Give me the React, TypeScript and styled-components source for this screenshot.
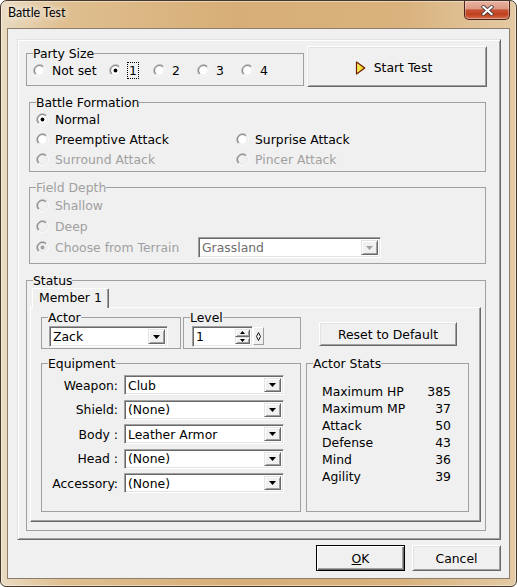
import React from "react";
import styled, { createGlobalStyle } from "styled-components";

const GlobalStyle = createGlobalStyle`
  *, *::before, *::after { box-sizing: border-box; }
  html, body { margin: 0; padding: 0; background: #ffffff; }
  body {
    font-family: "DejaVu Sans", Verdana, sans-serif;
    font-size: 12.4px;
    color: #000;
  }
`;

const Window = styled.div`
  width: 517px;
  height: 587px;
  display: flex;
  flex-direction: column;
  border: 1px solid #45382a;
  border-radius: 7px 7px 6px 6px;
  padding: 0 6px 7px;
  background: linear-gradient(90deg, #eadbc2 0%, #dfbf90 12%, #d7ae77 45%, #d9b27d 78%, #e4caa4 100%);
  box-shadow: inset 0 0 0 1px rgba(255, 255, 255, 0.45);
  overflow: hidden;
`;

const TitleBar = styled.div`
  height: 27px;
  flex: none;
  display: flex;
  justify-content: space-between;
  align-items: flex-start;
`;

const Title = styled.div`
  padding: 4px 0 0 1px;
  font-family: Lato, "Noto Sans", sans-serif;
  font-size: 12.5px;
  line-height: 16px;
  color: #000;
  text-shadow: 0 0 6px #fff, 0 0 10px rgba(255, 255, 255, 0.9);
`;

const CloseButton = styled.div`
  width: 46px;
  height: 19px;
  border: 1px solid #4a2018;
  border-top: none;
  border-radius: 0 0 5px 5px;
  background: linear-gradient(180deg, #e9b3a0 0%, #dc9a84 42%, #c75336 50%, #c1401f 75%, #d4704e 100%);
  box-shadow: inset 0 0 0 1px rgba(255, 255, 255, 0.35);
  display: flex;
  align-items: center;
  justify-content: center;
`;

const Client = styled.div`
  flex: 1;
  display: flex;
  flex-direction: column;
  background: #f0f0f0;
  border: 1px solid #8c7e6a;
  padding: 10px 8px 0 9px;
`;

const OuterPanel = styled.div`
  width: 484px;
  height: 501px;
  flex: none;
  border: 1px solid;
  border-color: #e3e3e3 #696969 #696969 #e3e3e3;
  box-shadow: inset 1px 1px 0 #fff, inset -1px -1px 0 #a0a0a0;
  padding: 6px 0 0 8px;
  display: flex;
  flex-direction: column;
  align-items: flex-start;
`;

const TopRow = styled.div`
  display: flex;
  align-items: flex-start;
`;

const Group = styled.fieldset<{ $w: number; $h: number; $ml?: number; $mt?: number }>`
  width: ${(p) => p.$w}px;
  height: ${(p) => p.$h}px;
  margin: ${(p) => p.$mt ?? 0}px 0 0 ${(p) => p.$ml ?? 0}px;
  padding: 0;
  border: 1px solid #a0a0a0;
  min-inline-size: 0;
  flex: none;
`;

const Legend = styled.legend<{ $disabled?: boolean }>`
  margin-left: 6px;
  padding: 0;
  line-height: 15px;
  font-size: 12.4px;
  color: ${(p) => (p.$disabled ? "#a0a0a0" : "#000")};
`;

const PartyRow = styled.div`
  display: flex;
  align-items: center;
  height: 18px;
  padding-left: 6px;
`;

const RadioItem = styled.label<{ $w?: number; $disabled?: boolean; $gap?: number }>`
  display: inline-flex;
  align-items: center;
  gap: ${(p) => p.$gap ?? 6}px;
  width: ${(p) => (p.$w ? `${p.$w}px` : "auto")};
  flex: none;
  color: ${(p) => (p.$disabled ? "#a0a0a0" : "#000")};
  line-height: 15px;
  white-space: nowrap;
`;

const FocusText = styled.span`
  border: 1px dotted #000;
  padding: 0 1px;
  line-height: 15px;
`;

const RadioGrid = styled.div<{ $rows: string }>`
  display: grid;
  grid-template-columns: 200px auto;
  grid-template-rows: ${(p) => p.$rows};
  align-items: center;
  padding-left: 6px;
`;

const TerrainRow = styled.div`
  display: flex;
  align-items: center;
  grid-column: 1 / span 2;
`;

const RaisedButton = styled.button<{ $w: number; $h: number; $ml?: number; $mt?: number; $default?: boolean }>`
  width: ${(p) => p.$w}px;
  height: ${(p) => p.$h}px;
  margin: ${(p) => p.$mt ?? 0}px 0 0 ${(p) => p.$ml ?? 0}px;
  flex: none;
  padding: 0;
  font-family: inherit;
  font-size: 12.4px;
  line-height: 15px;
  color: #000;
  background: #f0f0f0;
  border: 1px solid;
  border-color: ${(p) => (p.$default ? "#000 #000 #000 #000" : "#fff #696969 #696969 #fff")};
  box-shadow: ${(p) =>
    p.$default
      ? "inset 1px 1px 0 #fff, inset -1px -1px 0 #696969, inset -2px -2px 0 #a0a0a0"
      : "inset 1px 1px 0 #e3e3e3, inset -1px -1px 0 #a0a0a0"};
  display: flex;
  align-items: center;
  justify-content: center;
  gap: 8px;
`;

const StartLabel = styled.span`
  padding: 2px 7px 0 0;
  display: flex;
  align-items: center;
  gap: 8px;
`;

const Combo = styled.div<{ $w: number; $h: number; $ml?: number }>`
  width: ${(p) => p.$w}px;
  height: ${(p) => p.$h}px;
  margin-left: ${(p) => p.$ml ?? 0}px;
  flex: none;
  display: flex;
  padding: 2px;
  background: #fff;
  border: 1px solid;
  border-color: #a0a0a0 #fff #fff #a0a0a0;
  box-shadow: inset 1px 1px 0 #696969, inset -1px -1px 0 #e3e3e3;
`;

const ComboText = styled.div<{ $disabled?: boolean }>`
  flex: 1;
  padding-left: 1px;
  display: flex;
  align-items: center;
  white-space: nowrap;
  overflow: hidden;
  color: ${(p) => (p.$disabled ? "#6d6d6d" : "#000")};
`;

const ArrowButton = styled.div`
  width: 17px;
  flex: none;
  background: #f0f0f0;
  border: 1px solid;
  border-color: #e3e3e3 #696969 #696969 #e3e3e3;
  box-shadow: inset 1px 1px 0 #fff, inset -1px -1px 0 #a0a0a0;
  display: flex;
  align-items: center;
  justify-content: center;
`;

const TabArea = styled.div`
  display: flex;
  flex-direction: column;
  padding-left: 3px;
`;

const TabStrip = styled.div`
  height: 19px;
  display: flex;
  padding-left: 2px;
`;

const Tab = styled.div`
  position: relative;
  z-index: 1;
  width: 77px;
  height: 20px;
  background: #f0f0f0;
  border-left: 1px solid #fff;
  border-top: 1px solid #fff;
  border-right: 1px solid #696969;
  border-radius: 2px 2px 0 0;
  box-shadow: inset -1px 0 0 #a0a0a0;
  padding-left: 6px;
  line-height: 15px;
  padding-top: 1px;
`;

const TabPanel = styled.div`
  width: 451px;
  height: 215px;
  border: 1px solid;
  border-color: #fff #696969 #696969 #fff;
  box-shadow: inset -1px -1px 0 #a0a0a0;
  padding: 2px 0 0 10px;
  display: flex;
  flex-direction: column;
`;

const PanelRow = styled.div<{ $mt?: number }>`
  display: flex;
  align-items: flex-start;
  margin-top: ${(p) => p.$mt ?? 0}px;
`;

const GroupBody = styled.div<{ $pt?: number; $pl?: number }>`
  padding: ${(p) => p.$pt ?? 0}px 0 0 ${(p) => p.$pl ?? 0}px;
  display: flex;
  align-items: flex-start;
`;

const SpinField = styled(Combo)``;

const SpinButtons = styled.div`
  width: 15px;
  flex: none;
  display: flex;
  flex-direction: column;
`;

const SpinButton = styled.div`
  flex: 1;
  background: #f0f0f0;
  border: 1px solid;
  border-color: #e3e3e3 #696969 #696969 #e3e3e3;
  box-shadow: inset 1px 1px 0 #fff, inset -1px -1px 0 #a0a0a0;
  display: flex;
  align-items: center;
  justify-content: center;
`;

const SpinExtra = styled.div`
  width: 11px;
  height: 18px;
  margin-top: 1px;
  flex: none;
  background: #f0f0f0;
  border: 1px solid;
  border-color: #fff #a0a0a0 #a0a0a0 #fff;
  display: flex;
  align-items: center;
  justify-content: center;
`;

const EquipGrid = styled.div`
  display: grid;
  grid-template-columns: 76px 160px;
  column-gap: 6px;
  row-gap: 4.5px;
  padding-top: 4px;
  align-items: center;
`;

const EquipLabel = styled.div`
  text-align: right;
  white-space: nowrap;
  line-height: 15px;
`;

const StatGrid = styled.div`
  display: grid;
  grid-template-columns: 1fr auto;
  width: 129px;
  margin: 12px 0 0 15px;
  line-height: 17px;
`;

const StatValue = styled.div`
  text-align: right;
`;

const ButtonRow = styled.div`
  display: flex;
  justify-content: flex-end;
  gap: 7px;
  margin-top: 5px;
`;

const Radio = ({ checked, disabled }: { checked?: boolean; disabled?: boolean }) => (
  <svg width="13" height="13" viewBox="0 0 13 13" style={{ flex: "none" }}>
    <path d="M2.4 10.6 A5.8 5.8 0 0 1 10.6 2.4" stroke="#a0a0a0" fill="none" />
    <path d="M10.6 2.4 A5.8 5.8 0 0 1 2.4 10.6" stroke="#ffffff" fill="none" />
    <path d="M3.1 9.9 A4.8 4.8 0 0 1 9.9 3.1" stroke="#696969" fill="none" />
    <path d="M9.9 3.1 A4.8 4.8 0 0 1 3.1 9.9" stroke="#e3e3e3" fill="none" />
    <circle cx="6.5" cy="6.5" r="4.2" fill={disabled ? "#f0f0f0" : "#ffffff"} />
    {checked && <circle cx="6.5" cy="6.5" r="1.9" fill={disabled ? "#a0a0a0" : "#000000"} />}
  </svg>
);

const DownArrow = ({ color = "#000" }: { color?: string }) => (
  <svg width="7" height="4" viewBox="0 0 7 4">
    <path d="M0 0 H7 L3.5 4 Z" fill={color} />
  </svg>
);

const SmallArrow = ({ up }: { up?: boolean }) => (
  <svg width="5" height="3" viewBox="0 0 5 3">
    <path d={up ? "M0 3 H5 L2.5 0 Z" : "M0 0 H5 L2.5 3 Z"} fill="#000" />
  </svg>
);

const PlayIcon = () => (
  <svg width="11" height="14" viewBox="0 0 11 14">
    <defs>
      <linearGradient id="playFill" x1="0" y1="0" x2="1" y2="0">
        <stop offset="0" stopColor="#fff36a" />
        <stop offset="1" stopColor="#e8c800" />
      </linearGradient>
    </defs>
    <path d="M1.5 1 L9.8 7 L1.5 13 Z" fill="url(#playFill)" stroke="#6e1c00" strokeWidth="1.2" strokeLinejoin="round" />
  </svg>
);

const CloseGlyph = () => (
  <svg width="13" height="11" viewBox="0 0 13 11">
    <path d="M2.5 2 L10.5 9 M10.5 2 L2.5 9" stroke="#4a3a38" strokeWidth="3.8" strokeLinecap="square" />
    <path d="M2.5 2 L10.5 9 M10.5 2 L2.5 9" stroke="#ffffff" strokeWidth="2.2" strokeLinecap="square" />
  </svg>
);

const Diamond = () => (
  <svg width="5" height="9" viewBox="0 0 5 9">
    <path d="M2.5 0.5 L4.5 4.5 L2.5 8.5 L0.5 4.5 Z" fill="none" stroke="#000" strokeWidth="0.9" />
  </svg>
);

const ComboBox = ({ value, w, h, ml, disabled }: { value: string; w: number; h: number; ml?: number; disabled?: boolean }) => (
  <Combo $w={w} $h={h} $ml={ml}>
    <ComboText $disabled={disabled}>{value}</ComboText>
    <ArrowButton>
      <DownArrow color={disabled ? "#a0a0a0" : "#000"} />
    </ArrowButton>
  </Combo>
);

const equipment = [
  { label: "Weapon:", value: "Club" },
  { label: "Shield:", value: "(None)" },
  { label: "Body :", value: "Leather Armor" },
  { label: "Head :", value: "(None)" },
  { label: "Accessory:", value: "(None)" },
];

const stats = [
  { label: "Maximum HP", value: "385" },
  { label: "Maximum MP", value: "37" },
  { label: "Attack", value: "50" },
  { label: "Defense", value: "43" },
  { label: "Mind", value: "36" },
  { label: "Agility", value: "39" },
];

export default function App() {
  return (
    <>
      <GlobalStyle />
      <Window>
        <TitleBar>
          <Title>Battle Test</Title>
          <CloseButton>
            <CloseGlyph />
          </CloseButton>
        </TitleBar>
        <Client>
          <OuterPanel>
            <TopRow>
              <Group $w={278} $h={40}>
                <Legend>Party Size</Legend>
                <PartyRow>
                  <RadioItem $w={76}>
                    <Radio />
                    Not set
                  </RadioItem>
                  <RadioItem $w={44} $gap={5}>
                    <Radio checked />
                    <FocusText>1</FocusText>
                  </RadioItem>
                  <RadioItem $w={44}>
                    <Radio />2
                  </RadioItem>
                  <RadioItem $w={44}>
                    <Radio />3
                  </RadioItem>
                  <RadioItem>
                    <Radio />4
                  </RadioItem>
                </PartyRow>
              </Group>
              <RaisedButton $w={180} $h={41} $ml={3}>
                <StartLabel>
                  <PlayIcon />
                  Start Test
                </StartLabel>
              </RaisedButton>
            </TopRow>

            <Group $w={457} $h={77} $ml={3} $mt={8}>
              <Legend>Battle Formation</Legend>
              <RadioGrid $rows="18px 22px 18px">
                <RadioItem>
                  <Radio checked />
                  Normal
                </RadioItem>
                <span />
                <RadioItem>
                  <Radio />
                  Preemptive Attack
                </RadioItem>
                <RadioItem>
                  <Radio />
                  Surprise Attack
                </RadioItem>
                <RadioItem $disabled>
                  <Radio disabled />
                  Surround Attack
                </RadioItem>
                <RadioItem $disabled>
                  <Radio disabled />
                  Pincer Attack
                </RadioItem>
              </RadioGrid>
            </Group>

            <Group $w={457} $h={84} $ml={3} $mt={8}>
              <Legend $disabled>Field Depth</Legend>
              <RadioGrid $rows="21px 21px 21px">
                <RadioItem $disabled>
                  <Radio disabled />
                  Shallow
                </RadioItem>
                <span />
                <RadioItem $disabled>
                  <Radio disabled />
                  Deep
                </RadioItem>
                <span />
                <TerrainRow>
                  <RadioItem $disabled $w={162}>
                    <Radio disabled checked />
                    Choose from Terrain
                  </RadioItem>
                  <ComboBox value="Grassland" w={183} h={21} disabled />
                </TerrainRow>
              </RadioGrid>
            </Group>

            <Group $w={460} $h={258} $mt={9}>
              <Legend>Status</Legend>
              <TabArea>
                <TabStrip>
                  <Tab>Member 1</Tab>
                </TabStrip>
                <TabPanel>
                  <PanelRow>
                    <Group $w={140} $h={39}>
                      <Legend>Actor</Legend>
                      <GroupBody $pt={1} $pl={7}>
                        <ComboBox value="Zack" w={119} h={21} />
                      </GroupBody>
                    </Group>
                    <Group $w={118} $h={39} $ml={2}>
                      <Legend>Level</Legend>
                      <GroupBody $pt={1} $pl={8}>
                        <SpinField $w={61} $h={21}>
                          <ComboText>1</ComboText>
                          <SpinButtons>
                            <SpinButton>
                              <SmallArrow up />
                            </SpinButton>
                            <SpinButton>
                              <SmallArrow />
                            </SpinButton>
                          </SpinButtons>
                        </SpinField>
                        <SpinExtra>
                          <Diamond />
                        </SpinExtra>
                      </GroupBody>
                    </Group>
                    <RaisedButton $w={138} $h={24} $ml={18} $mt={12}>
                      Reset to Default
                    </RaisedButton>
                  </PanelRow>
                  <PanelRow $mt={7}>
                    <Group $w={260} $h={156}>
                      <Legend>Equipment</Legend>
                      <EquipGrid>
                        {equipment.map((e) => (
                          <React.Fragment key={e.label}>
                            <EquipLabel>{e.label}</EquipLabel>
                            <ComboBox value={e.value} w={160} h={20} />
                          </React.Fragment>
                        ))}
                      </EquipGrid>
                    </Group>
                    <Group $w={163} $h={156} $ml={5}>
                      <Legend>Actor Stats</Legend>
                      <StatGrid>
                        {stats.map((s) => (
                          <React.Fragment key={s.label}>
                            <div>{s.label}</div>
                            <StatValue>{s.value}</StatValue>
                          </React.Fragment>
                        ))}
                      </StatGrid>
                    </Group>
                  </PanelRow>
                </TabPanel>
              </TabArea>
            </Group>
          </OuterPanel>
          <ButtonRow>
            <RaisedButton $w={89} $h={26} $default>
              <span>
                <u>O</u>K
              </span>
            </RaisedButton>
            <RaisedButton $w={89} $h={26}>
              Cancel
            </RaisedButton>
          </ButtonRow>
        </Client>
      </Window>
    </>
  );
}
